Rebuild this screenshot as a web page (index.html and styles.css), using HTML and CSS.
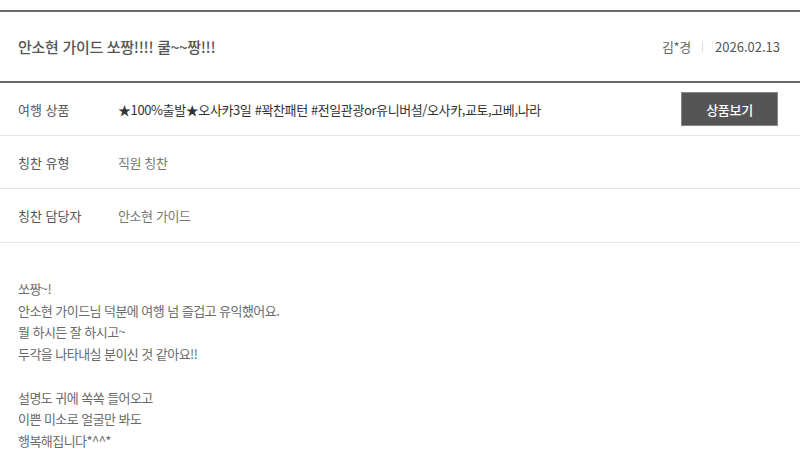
FILE: index.html
```html
<!DOCTYPE html>
<html lang="ko">
<head>
<meta charset="utf-8">
<link rel="stylesheet" href="styles.css">
</head>
<body>
<div class="view">
  <div class="head">
    <h2 class="title">안소현 가이드 쏘짱!!!! 쿨~~짱!!!</h2>
    <div class="meta"><span class="writer">김*경</span><span class="bar"></span><span class="date">2026.02.13</span></div>
  </div>
  <div class="row">
    <div class="label">여행 상품</div>
    <div class="value strong">★100%출발★오사카3일 #꽉찬패턴 #전일관광or유니버셜/오사카,교토,고베,나라</div>
    <a class="btn">상품보기</a>
  </div>
  <div class="row">
    <div class="label">칭찬 유형</div>
    <div class="value">직원 칭찬</div>
  </div>
  <div class="row row-last">
    <div class="label">칭찬 담당자</div>
    <div class="value">안소현 가이드</div>
  </div>
  <div class="content">
    <p>쏘짱~!<br>안소현 가이드님 덕분에 여행 넘 즐겁고 유익했어요.<br>뭘 하시든 잘 하시고~<br>두각을 나타내실 분이신 것 같아요!!</p>
    <p>설명도 귀에 쏙쏙 들어오고<br>이쁜 미소로 얼굴만 봐도<br>행복해집니다*^^*</p>
  </div>
</div>
</body>
</html>
```

FILE: styles.css
```css
html, body {
  margin: 0;
  padding: 0;
  background: #fff;
}
body {
  font-family: "Noto Sans CJK KR", "Noto Sans", sans-serif;
  color: #555;
}
.view {
  padding-top: 10px;
}
.head {
  display: flex;
  align-items: center;
  justify-content: space-between;
  padding: 0 20px 0 18px;
  border-top: 2px solid #6a6a6a;
  border-bottom: 2px solid #6a6a6a;
  box-sizing: border-box;
  height: 73px;
}
.title {
  margin: 0;
  font-size: 15px;
  font-weight: 500;
  color: #555;
  letter-spacing: -0.3px;
}
.meta {
  display: flex;
  align-items: center;
  font-size: 13px;
  color: #666;
}
.writer {
  letter-spacing: -0.3px;
}
.bar {
  width: 1px;
  height: 11px;
  background: #ddd;
  margin: 0 12px 0 11px;
}
.date {
  color: #555;
}
.row {
  display: flex;
  align-items: center;
  height: 53px;
  padding: 0 22px 0 18px;
  border-bottom: 1px solid #e6e6e6;
  box-sizing: border-box;
  font-size: 13px;
}
.row-last {
  height: 54px;
}
.label {
  width: 100px;
  flex: none;
  color: #555;
}
.value {
  flex: 1;
  color: #777;
  letter-spacing: -0.4px;
}
.value.strong {
  color: #333;
}
.btn {
  flex: none;
  display: flex;
  align-items: center;
  justify-content: center;
  width: 97px;
  height: 34px;
  box-sizing: border-box;
  background: #555;
  border: 1px solid #888;
  color: #fff;
  font-size: 13px;
  font-weight: 500;
  letter-spacing: -0.3px;
}
.content {
  padding: 35px 18px 0;
  font-size: 13px;
  line-height: 21.7px;
  color: #6a6a6a;
  letter-spacing: -0.55px;
}
.content p {
  margin: 0 0 21.7px;
}
```
